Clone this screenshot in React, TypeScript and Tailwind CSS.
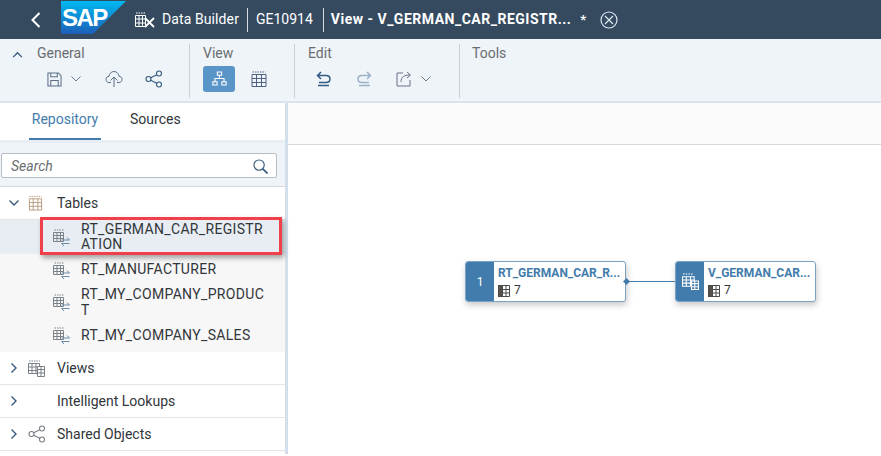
import React from "react";

const F = "[font-family:Roboto,'Noto_Sans',sans-serif]";

function Grid({ c = "#6a6d70", className = "" }: { c?: string; className?: string }) {
  return (
    <svg viewBox="0 0 16 16" className={className} fill="none" stroke={c} strokeWidth="1">
      <path d="M1.500 1h13" strokeDasharray="1.500 1" />
      <path d="M1.500 3.500h13v12h-13zM1.500 7.500h13M1.500 11.500h13M5.500 3.500v12M10.500 3.500v12" />
    </svg>
  );
}

function ViewsIcon() {
  return (
    <svg viewBox="0 0 17 17" className="w-[17px] h-[17px]" fill="none" stroke="#7a8087" strokeWidth="1">
      <path d="M1 1h11" strokeDasharray="1.500 1" />
      <path d="M.500 3.500h11v10h-11zM.500 7h11M.500 10.500h11M4 3.500v10M8 3.500v10" />
      <path d="M9.500 6.500h7v10h-7zM9.500 9.500h7M9.500 13h7M13 6.500v10" fill="#fff" />
    </svg>
  );
}

function TableSync() {
  return (
    <svg viewBox="0 0 17 17" className="w-[17px] h-[17px] shrink-0" fill="none" stroke="#7b8288" strokeWidth="1">
      <path d="M1.500 1h9" strokeDasharray="1.500 1" />
      <path d="M.500 3.500h10v9h-10zM.500 6.500h10M.500 9.500h10M4 3.500v9M7.500 3.500v9" />
      <path d="M8.500 11h8l-2.500-2.500M16.500 14.500h-8l2.500 2.500" stroke="#6a8aa6" />
    </svg>
  );
}

function Chevron({ open }: { open?: boolean }) {
  return (
    <svg viewBox="0 0 12 12" className="w-3 h-3" fill="none" stroke="#34597c" strokeWidth="1.400">
      {open ? <path d="M1.500 3.500 6 8l4.500-4.500" /> : <path d="M3.500 1.500 8 6l-4.500 4.500" />}
    </svg>
  );
}

function Small({ c = "#6a7b8c" }: { c?: string }) {
  return (
    <svg viewBox="0 0 10 6" className="w-[10px] h-[6px]" fill="none" stroke={c} strokeWidth="1">
      <path d="M.5.500 5 5 9.500.500" />
    </svg>
  );
}

function Share({ c = "#34597c", s = 18 }: { c?: string; s?: number }) {
  return (
    <svg viewBox="0 0 18 18" width={s} height={s} fill="none" stroke={c} strokeWidth="1.100">
      <circle cx="3.500" cy="9" r="2.500" />
      <circle cx="14" cy="3.500" r="2.500" />
      <circle cx="14" cy="14.500" r="2.500" />
      <path d="M5.700 7.800 11.800 4.700M5.700 10.200l6.100 3.100" />
    </svg>
  );
}

function Group({ title, children, w, last }: { title: string; children?: React.ReactNode; w: string; last?: boolean }) {
  return (
    <div className={`${w} h-[54px] mt-[5px] flex flex-col ${last ? "" : "border-r border-[#c9d0d6]"}`}>
      <div className="text-[14px] leading-[18px] text-[#6a6d70]">{title}</div>
      <div className="flex items-center mt-[8px] h-[18px]">{children}</div>
    </div>
  );
}

function Sub({ lines, h }: { lines: string[]; h: string }) {
  return (
    <div className={`flex items-center pl-[53px] ${h}`}>
      <TableSync />
      <div className="ml-[11px] whitespace-nowrap text-[14px] leading-[15.500px] tracking-[0.33px] text-[#32363a]">
        {lines.map((l) => (
          <div key={l}>{l}</div>
        ))}
      </div>
    </div>
  );
}

function Top({ icon, label, open, h = "h-[33px]" }: { icon?: React.ReactNode; label: string; open?: boolean; h?: string }) {
  return (
    <div className={`flex items-center ${h} border-b border-[#e5e5e5] bg-white`}>
      <div className="w-[28px] flex justify-center">
        <Chevron open={open} />
      </div>
      <div className="w-[29px] flex items-center">{icon}</div>
      <div className="text-[14px] text-[#32363a]">{label}</div>
    </div>
  );
}

function Node({ left, title, side, w }: { left: string; title: string; side: React.ReactNode; w: string }) {
  return (
    <div className={`absolute top-[261px] ${left} ${w} h-[41px] flex bg-white rounded-[3px] border border-[#7ba3c6] shadow-[1px_3px_6px_rgba(0,0,0,0.22)] overflow-hidden`}>
      <div className="w-[28px] bg-[#427cac] flex items-center justify-center text-white text-[12px] shrink-0">{side}</div>
      <div className="pl-[4px] min-w-0">
        <div className="text-[12px] leading-[15px] mt-[4px] font-bold text-[#427cac] whitespace-nowrap">{title}</div>
        <div className="flex items-center mt-[2px] gap-[4px] text-[12px] leading-[15px] text-[#32363a]">
          <svg viewBox="0 0 12 12" className="w-3 h-3" fill="none" stroke="#4a4a4a">
            <rect x="0" y="0" width="4" height="12" fill="#5a5248" stroke="none" />
            <path d="M.500.500h11v11H.500zM4.500.500v11M8 .500v11M.500 4.500h11M.500 8h11" />
          </svg>
          7
        </div>
      </div>
    </div>
  );
}

export default function App() {
  return (
    <div className={`relative w-[881px] h-[456px] overflow-hidden bg-white ${F}`}>
      <header className="h-[39px] bg-[#354a5f] flex items-center text-white">
        <svg viewBox="0 0 12 16" className="w-[12px] h-[16px] ml-[30px]" fill="none" stroke="#fff" strokeWidth="2">
          <path d="M9.500 1 2.500 8l7 7" />
        </svg>
        <svg viewBox="0 0 65 33" className="ml-[19px] w-[65px] h-[33px] self-start mt-px">
          <defs>
            <linearGradient id="sapg" x1="0" y1="0" x2="0" y2="1">
              <stop offset="0" stopColor="#00b8f1" />
              <stop offset="1" stopColor="#1d5fb8" />
            </linearGradient>
          </defs>
          <path d="M0 0h65L32 33H0z" fill="url(#sapg)" />
          <text x="1" y="25" fontSize="24" fontWeight="800" fill="#fff" fontFamily="Liberation Sans" letterSpacing="-1.500">SAP</text>
        </svg>
        <svg viewBox="0 0 20 16" className="ml-[9px] w-[20px] h-[16px]" fill="none" stroke="#fff" strokeWidth="1">
          <path d="M1 1h10" strokeDasharray="1.500 1" />
          <path d="M.500 3.500h10v11h-10zM.500 7h10M.500 11h10M4 3.500v11M7.500 3.500v11" />
          <path d="M10 6l9 9M19 6l-9 9" strokeWidth="1.800" />
        </svg>
        <span className="ml-[7px] text-[14px] tracking-[0.1px]">Data Builder</span>
        <span className="ml-[8px] w-px h-[24px] bg-[#d5dce3]" />
        <span className="ml-[8px] text-[14px]">GE10914</span>
        <span className="ml-[10px] w-px h-[24px] bg-[#d5dce3]" />
        <span className="ml-[7px] text-[14px] font-bold tracking-[0.5px] whitespace-nowrap">View - V_GERMAN_CAR_REGISTR...</span>
        <span className="ml-[9px] text-[13px] font-bold">*</span>
        <svg viewBox="0 0 18 18" className="ml-[14px] w-[18px] h-[18px]" fill="none" stroke="#dbe7f2" strokeWidth="1.200">
          <circle cx="9" cy="9" r="8" />
          <path d="m5 5 8 8M13 5l-8 8" />
        </svg>
      </header>

      <div className="h-[64px] bg-[#eff4f9] border-b-2 border-[#d9e4ef] flex">
        <div className="w-[37px] pt-[12px] pl-[12px]">
          <svg viewBox="0 0 12 8" className="w-[11px] h-[7px]" fill="none" stroke="#34597c" strokeWidth="1.500">
            <path d="M1 7l5-5 5 5" />
          </svg>
        </div>
        <Group title="General" w="w-[153px]">
          <svg viewBox="0 0 16 16" className="ml-[10px] w-[15px] h-[15px]" fill="none" stroke="#5a6f85" strokeWidth="1.100">
            <path d="M1 1h11l3 3v11H1zM4 1v4h7V1M4 15V9h8v6" />
          </svg>
          <span className="ml-[9px]"><Small /></span>
          <svg viewBox="0 0 18 18" className="ml-[24px] w-[18px] h-[18px]" fill="none" stroke="#5a6f85" strokeWidth="1">
            <path d="M6 12.500H4C2 12.500 1 11 1 9.300 1 7.500 2.300 6.300 4 6.300 4.300 3.500 6.500 1.500 9 1.500s4.700 2 5 4.800c1.700 0 3 1.200 3 3 0 1.700-1 3.200-3 3.200h-2" />
            <path d="M9 17V7M5.500 10.500 9 7l3.500 3.500" />
          </svg>
          <span className="ml-[22px]"><Share /></span>
        </Group>
        <div className="w-[13px]" />
        <Group title="View" w="w-[92px]">
          <div className="w-[32px] h-[26px] -mt-[1px] rounded-[3px] bg-[#5a95c8] flex items-center justify-center">
            <svg viewBox="0 0 14 14" className="w-[15px] h-[15px]" fill="none" stroke="#fff" strokeWidth="1">
              <path d="M5 1h4v3H5zM.800 10h4v3h-4zM9.200 10h4v3h-4zM7 4v3M2.800 10V7h8.400v3" />
            </svg>
          </div>
          <div className="ml-[16px]">
            <svg viewBox="0 0 16 16" className="w-[16px] h-[16px]" fill="none" stroke="#4f5f80" strokeWidth="1">
              <path d="M1.500 1h13" strokeDasharray="1.500 1" />
              <path d="M1 3.500h14v12H1zM1 7.500h14M1 11.500h14M5.500 3.500v12M10.500 3.500v12" />
            </svg>
          </div>
        </Group>
        <div className="w-[13px]" />
        <Group title="Edit" w="w-[152px]">
          <svg viewBox="0 0 16 16" className="ml-[8px] w-[16px] h-[16px]" fill="none" stroke="#2f5b85" strokeWidth="1.500">
            <path d="M5 1 1.500 4.500 5 8M2 4.500h8c2.500 0 4 1.500 4 3.500s-1.500 3.500-4 3.500H3M2 14.500h11" />
          </svg>
          <svg viewBox="0 0 16 16" className="ml-[24px] w-[16px] h-[16px]" fill="none" stroke="#9db2c8" strokeWidth="1.500">
            <path d="M11 1l3.500 3.500L11 8M14 4.500H6C3.500 4.500 2 6 2 8s1.500 3.500 4 3.500h7M3 14.500h11" />
          </svg>
          <svg viewBox="0 0 16 16" className="ml-[24px] w-[16px] h-[16px]" fill="none" stroke="#6f6f8c" strokeWidth="1">
            <path d="M7 2H1v13h13V9M5 11c0-5 3-7 9-7M11 1l3.500 3-3.500 3" />
          </svg>
          <span className="ml-[9px]"><Small /></span>
        </Group>
        <div className="pl-[12px] mt-[5px] text-[14px] leading-[18px] text-[#6a6d70]">Tools</div>
      </div>

      <div className="flex h-[351px]">
        <aside className="w-[288px] shrink-0 border-r-[3px] border-[#d3e0ec] flex flex-col">
          <div className="h-[40px] flex border-b-[3px] border-[#e8eef4] text-[14px]">
            <div className="ml-[29px] h-[37px] w-[72px] pb-[2px] flex items-center justify-center text-[#427cac] border-b-[2px] border-[#427cac]">Repository</div>
            <div className="ml-[29px] h-[33px] flex items-center text-[#32363a]">Sources</div>
          </div>
          <div className="h-[44px] bg-[#eff4f9] border-b border-[#d9d9d9] pt-[10px] pl-px">
            <div className="w-[276px] h-[25px] pt-px bg-white border border-[#b8bec4] rounded-[2px] flex items-center justify-between pl-[9px] pr-[8px]">
              <span className="text-[14px] italic text-[#6a6d70]">Search</span>
              <svg viewBox="0 0 16 16" className="w-[15px] h-[15px]" fill="none" stroke="#34597c" strokeWidth="1.200">
                <circle cx="6.500" cy="6.500" r="5.500" />
                <path d="m10.500 10.500 5 5" strokeWidth="1.800" />
              </svg>
            </div>
          </div>
          <Top open label="Tables" icon={<Grid c="#b59a7c" className="w-[15px] h-[16px]" />} />
          <div className="bg-[#f7f7f7]">
            <Sub h="h-[34px] bg-[#e7edf3]" lines={["RT_GERMAN_CAR_REGISTR", "ATION"]} />
            <Sub h="h-[32px]" lines={["RT_MANUFACTURER"]} />
            <Sub h="h-[33px]" lines={["RT_MY_COMPANY_PRODUC", "T"]} />
            <Sub h="h-[33px]" lines={["RT_MY_COMPANY_SALES"]} />
          </div>
          <Top label="Views" icon={<ViewsIcon />} />
          <Top label="Intelligent Lookups" />
          <Top label="Shared Objects" icon={<Share c="#7a8087" />} />
        </aside>
        <main className="flex-1 min-w-0">
          <div className="h-[42px] bg-[#fbfbfb] border-b border-[#d9d9d9]" />
        </main>
      </div>

      <div className="absolute left-[40px] top-[217px] w-[242px] h-[38px] border-[3px] border-[#f0404a] shadow-[2px_3px_5px_rgba(0,0,0,0.35)]" />

      <Node left="left-[465px]" w="w-[161px]" title="RT_GERMAN_CAR_R..." side="1" />
      <Node
        left="left-[675px]"
        w="w-[141px]"
        title="V_GERMAN_CAR..."
        side={
          <svg viewBox="0 0 16 16" className="w-[17px] h-[17px]" fill="none" stroke="#fff" strokeWidth="1">
            <path d="M1 1h10" strokeDasharray="1.500 1" />
            <path d="M.500 3.500h11v9h-11zM.500 6.500h11M.500 9.500h11M4 3.500v9M8 3.500v9" />
            <path d="M9 7.500h6.500v8H9zM9 10h6.500M9 13h6.500M12 7.500v8" fill="#427cac" />
          </svg>
        }
      />
      <div className="absolute left-[626px] top-[281px] w-[49px] h-px bg-[#427cac]" />
      <div className="absolute left-[624px] top-[279px] w-[5px] h-[5px] rotate-45 bg-[#427cac]" />
    </div>
  );
}
